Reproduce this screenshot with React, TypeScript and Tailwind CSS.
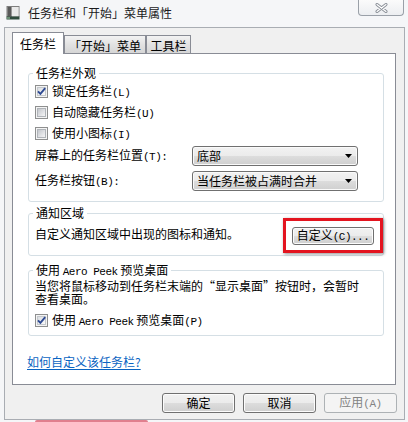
import React from "react";

function M({ children }: { children: React.ReactNode }) {
  return (
    <span className="font-['Liberation_Mono',monospace] text-[11px] tracking-[-0.5px]">
      {children}
    </span>
  );
}

function CheckBox({ checked = false }: { checked?: boolean }) {
  return (
    <span className="relative flex h-[13px] w-[13px] shrink-0 items-center justify-center border border-[#8e8f8f] bg-[#f4f4f4]">
      <span
        className={
          checked
            ? "h-[9px] w-[9px] border border-[#c4c8cc] bg-[linear-gradient(135deg,#dadde1_0%,#eeeff1_60%,#fbfbfb_100%)]"
            : "h-[9px] w-[9px] border border-[#b0b4b9] bg-[linear-gradient(135deg,#c3c6cb_0%,#e2e3e6_60%,#f5f5f5_100%)]"
        }
      />
      {checked && (
        <svg className="absolute left-0 top-0" width="11" height="11" viewBox="0 0 11 11">
          <path d="M2 5.3 L4.4 7.8 L9.2 2.2" fill="none" stroke="#2e4a93" strokeWidth="1.9" />
        </svg>
      )}
    </span>
  );
}

const grad =
  "bg-[linear-gradient(#f2f2f2_0%,#ebebeb_50%,#dddddd_50%,#cfcfcf_100%)]";

function Dropdown({ text }: { text: string }) {
  return (
    <div
      className={`flex h-[20px] w-[166px] items-center justify-between rounded-[3px] border border-[#707070] ${grad} pl-[4px] pr-[5px] shadow-[inset_0_0_0_1px_#fafafa]`}
    >
      <span className="leading-[14px]">{text}</span>
      <svg width="7" height="4" viewBox="0 0 7 4">
        <path d="M0 0H7L3.5 4Z" fill="#000" />
      </svg>
    </div>
  );
}

function Btn({
  children,
  w,
  h,
  disabled = false,
}: {
  children: React.ReactNode;
  w: string;
  h: string;
  disabled?: boolean;
}) {
  return (
    <div
      className={
        disabled
          ? `flex ${w} ${h} items-center justify-center rounded-[3px] border border-[#adb2b5] bg-[#f4f4f4] text-[#838383]`
          : `flex ${w} ${h} items-center justify-center rounded-[3px] border border-[#707070] ${grad} shadow-[inset_0_0_0_1px_#fcfcfc]`
      }
    >
      {children}
    </div>
  );
}

const fs =
  "ml-[15px] w-[356px] rounded-[3px] border border-[#d5dfe5] pl-[6px]";
const lg = "-ml-[2px] h-[14px] px-[3px] leading-[14px]";

export default function App() {
  return (
    <div className="relative h-[422px] w-[408px] overflow-hidden bg-[#f5f6f8] font-['Noto_Sans_CJK_SC',sans-serif] text-[12px] text-black">
      {/* title bar */}
      <div className="flex h-[27px] items-start">
        <div className="flex h-[25px] items-center">
          <svg className="ml-[6px]" width="14" height="14" viewBox="0 0 14 14">
            <rect x="1" y="0.5" width="12" height="10" fill="#d6d6d6" stroke="#7d7d7d" />
            <rect x="1.5" y="1" width="4" height="9.5" fill="#5a5a5a" />
            <rect x="6" y="1" width="6.5" height="9.5" fill="#e9e9e9" />
            <rect x="0.5" y="10.5" width="13" height="3" fill="#2f4b3c" />
            <rect x="1" y="11" width="3" height="2" fill="#6a8f74" />
          </svg>
          <span className="ml-[8px] leading-[14px] text-[#1b1b1b]">
            任务栏和「开始」菜单属性
          </span>
        </div>
        <div className="ml-auto mr-[4px] flex h-[16px] w-[46px] items-center justify-center rounded-b-[4px] border border-t-0 border-[#9aa0a8] bg-[linear-gradient(#fbfbfb,#eceef1)]">
          <svg width="13" height="10" viewBox="0 0 13 10">
            <path d="M2 1.5 L11 8.5 M11 1.5 L2 8.5" stroke="#8a8f97" strokeWidth="3" strokeLinecap="round" />
            <path d="M2 1.5 L11 8.5 M11 1.5 L2 8.5" stroke="#ffffff" strokeWidth="1.2" strokeLinecap="round" />
          </svg>
        </div>
      </div>

      {/* client area */}
      <div className="ml-[4px] flex h-[393px] w-[401px] flex-col border border-[#a9adb3] bg-[#f0f0f0] pl-[7px]">
        {/* tabs */}
        <div className="relative z-10 -mb-[1px] mt-[4px] flex h-[22px] items-end">
          <div className="flex h-[22px] w-[52px] items-center justify-center border border-b-0 border-[#898c95] bg-white pt-[1px]">
            任务栏
          </div>
          <div className="mb-[1px] flex h-[18px] w-[82px] items-center justify-center border border-b-0 border-[#898c95] bg-[linear-gradient(#f3f3f3,#e2e2e2_50%,#d6d6d6)] pt-[2px]">
            「开始」菜单
          </div>
          <div className="mb-[1px] flex h-[18px] w-[45px] items-center justify-center border border-b-0 border-[#898c95] bg-[linear-gradient(#f3f3f3,#e2e2e2_50%,#d6d6d6)] pt-[2px]">
            工具栏
          </div>
        </div>

        {/* tab page */}
        <div className="flex h-[332px] w-[384px] flex-col border border-[#898c95] bg-white">
          <fieldset className={`${fs} mt-[12px] pb-[10px]`}>
            <legend className={lg}>任务栏外观</legend>
            <div className="pt-[1px]">
              <div className="flex h-[21px] items-center gap-[4px]">
                <CheckBox checked />
                <span>
                  锁定任务栏<M>(L)</M>
                </span>
              </div>
              <div className="flex h-[21px] items-center gap-[4px]">
                <CheckBox />
                <span>
                  自动隐藏任务栏<M>(U)</M>
                </span>
              </div>
              <div className="flex h-[21px] items-center gap-[4px]">
                <CheckBox />
                <span>
                  使用小图标<M>(I)</M>
                </span>
              </div>
              <div className="mt-[2px] flex h-[20px] items-center">
                <span className="w-[157px]">
                  屏幕上的任务栏位置<M>(T):</M>
                </span>
                <Dropdown text="底部" />
              </div>
              <div className="mt-[5px] flex h-[20px] items-center">
                <span className="w-[157px]">
                  任务栏按钮<M>(B):</M>
                </span>
                <Dropdown text="当任务栏被占满时合并" />
              </div>
            </div>
          </fieldset>

          <fieldset className={`${fs} mt-[4px] pb-[10px]`}>
            <legend className={lg}>通知区域</legend>
            <div className="mt-[7px] flex items-center justify-between pr-[9px]">
              <span className="-mt-[4px]">自定义通知区域中出现的图标和通知。</span>
              <Btn w="w-[82px]" h="h-[18px]">
                <span>
                  自定义<M>(C)...</M>
                </span>
              </Btn>
            </div>
          </fieldset>

          <fieldset className={`${fs} mt-[7px] pb-[4px]`}>
            <legend className={lg}>
              使用 <M>Aero Peek</M> 预览桌面
            </legend>
            <p className="mt-[2px] whitespace-nowrap leading-[13px]">
              当您将鼠标移动到任务栏末端的“显示桌面”按钮时，会暂时
              <br />
              查看桌面。
            </p>
            <div className="mt-[5px] flex h-[21px] items-center gap-[4px]">
              <CheckBox checked />
              <span>
                使用 <M>Aero Peek</M> 预览桌面<M>(P)</M>
              </span>
            </div>
          </fieldset>

          <div className="ml-[14px] mt-[19px] leading-[14px]">
            <span className="text-[#0a64c2] underline underline-offset-2">
              如何自定义该任务栏?
            </span>
          </div>
        </div>

        {/* buttons */}
        <div className="mt-[8px] flex justify-end gap-[8px] pr-[7px]">
          <Btn w="w-[73px]" h="h-[20px]">确定</Btn>
          <Btn w="w-[73px]" h="h-[20px]">取消</Btn>
          <Btn w="w-[73px]" h="h-[20px]" disabled>
            <span>
              应用<M>(A)</M>
            </span>
          </Btn>
        </div>
      </div>

      <div className="ml-[35px] h-[2px] w-[113px] rounded-t-[2px] bg-[#e07f8e]" />

      {/* red highlight */}
      <div className="pointer-events-none absolute left-[283px] top-[218px] h-[35px] w-[100px] border-[3px] border-[#e3141f] shadow-[1px_1px_3px_rgba(0,0,0,0.45)]" />
    </div>
  );
}
